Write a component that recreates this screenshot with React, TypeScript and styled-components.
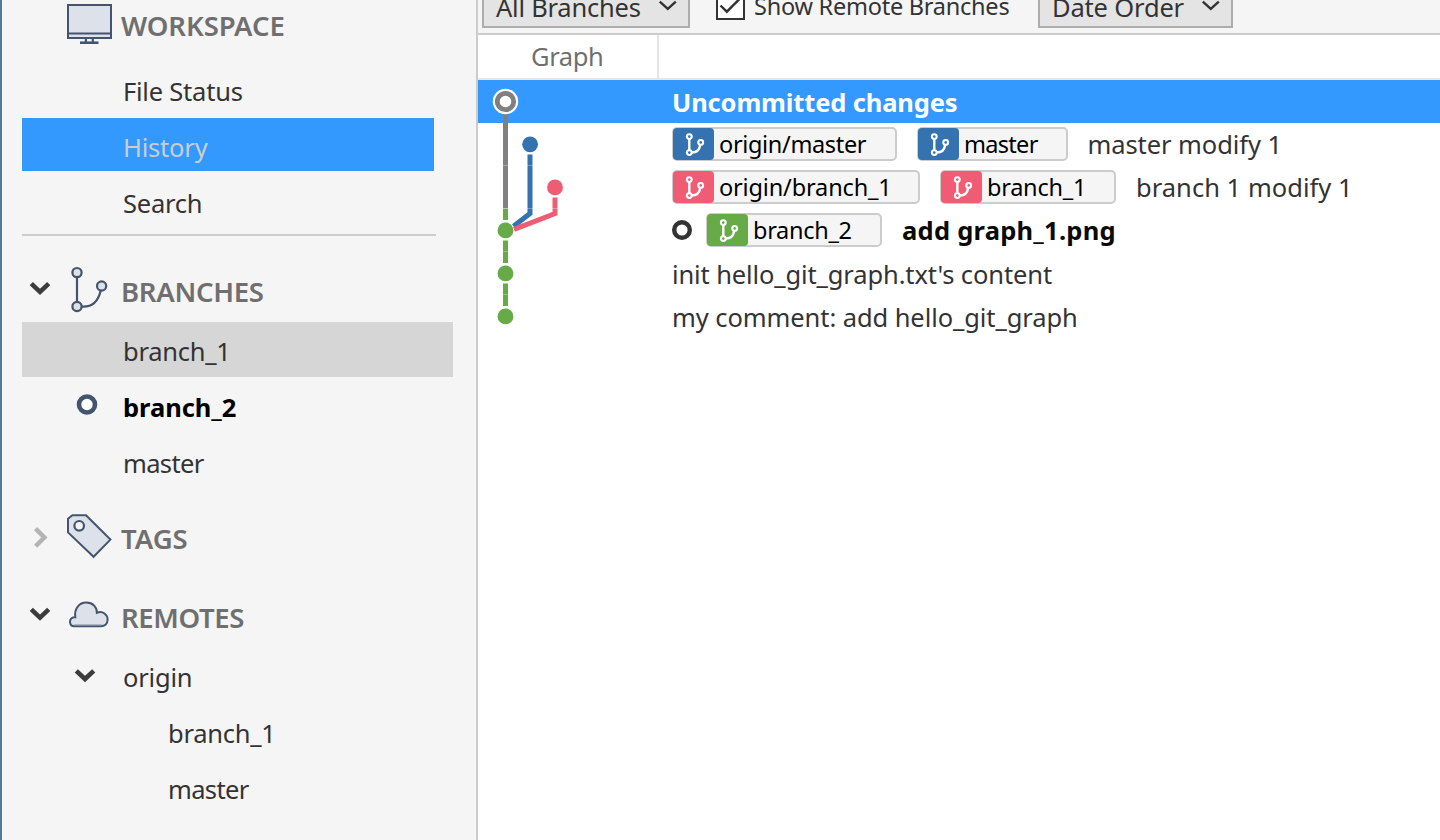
import React from 'react';
import styled, { createGlobalStyle } from 'styled-components';

const colors = {
  panel: '#f5f5f5',
  line: '#cccccc',
  accent: '#3399ff',
  slate: '#44546f',
  slateFill: '#dde1ea',
  blue: '#3572b0',
  pink: '#f15c75',
  green: '#67ab49',
  gray: '#808080',
};

const GlobalStyle = createGlobalStyle`
  * { box-sizing: border-box; }
  body {
    margin: 0;
    overflow: hidden;
    background: #fff;
    color: #333;
    font-family: 'Noto Sans', 'Open Sans', sans-serif;
    font-size: 25.5px;
  }
`;

const Window = styled.div`
  display: flex;
  width: 1440px;
  height: 840px;
  border-left: 2px solid #5a7699;
  overflow: hidden;
`;

const Label = styled.span<{ $spacing?: number }>`
  white-space: pre;
  letter-spacing: ${(p) => p.$spacing ?? 0}px;
`;

/* ---------- sidebar ---------- */

const Sidebar = styled.aside`
  flex: none;
  width: 476px;
  padding-left: 20px;
  background: ${colors.panel};
  border-right: 2px solid ${colors.line};
`;

const SectionHeader = styled.div<{ $height: number; $gap?: number }>`
  display: grid;
  grid-template-columns: 44px 48px auto;
  justify-content: start;
  height: ${(p) => p.$height}px;
  margin-top: ${(p) => p.$gap ?? 0}px;
  color: #6f6f6f;
  font-size: 27.5px;
  font-weight: 600;
  line-height: 52px;
`;

const HeaderLabel = styled(Label)`
  padding-left: 7px;
`;

const IconSlot = styled.svg`
  display: block;
  height: 50px;
  fill: none;
`;

const itemHeights = { plain: 56, current: 53, selected: 55, checked: 56 };

const Item = styled.div<{ $depth?: number; $tone?: 'current' | 'selected' | 'checked' }>`
  display: grid;
  grid-template-columns: 101px auto;
  justify-content: start;
  width: ${(p) => (p.$tone === 'selected' ? 431.4 : 411.6)}px;
  height: ${(p) => itemHeights[p.$tone ?? 'plain']}px;
  margin-bottom: ${(p) => 56 - itemHeights[p.$tone ?? 'plain']}px;
  padding-left: ${(p) => (p.$depth ?? 0) * 45}px;
  line-height: 59px;
  background: ${(p) =>
    p.$tone === 'current' ? colors.accent : p.$tone === 'selected' ? '#d6d6d6' : 'transparent'};
  color: ${(p) => (p.$tone === 'current' ? '#cccccc' : p.$tone === 'checked' ? '#000' : '#333')};
  font-weight: ${(p) => (p.$tone === 'checked' ? 700 : 400)};
`;

const ItemLabel = styled(Label)`
  grid-column: 2;
`;

const Marker = styled.svg`
  display: block;
  width: 100px;
  height: 55px;
  grid-row: 1;
  fill: none;
`;

const Divider = styled.hr`
  width: 414px;
  height: 2px;
  margin: 4px 0 30px;
  border: 0;
  background: ${colors.line};
`;

/* ---------- history ---------- */

const Main = styled.main`
  flex: 1;
  min-width: 0;
  background: #fff;
`;

const Toolbar = styled.div`
  display: flex;
  align-items: flex-end;
  height: 35px;
  padding: 0 0 5px 4px;
  background: ${colors.panel};
  border-bottom: 2px solid ${colors.line};
  overflow: hidden;
`;

const Select = styled.div<{ $width: number }>`
  display: flex;
  justify-content: space-between;
  flex: none;
  width: ${(p) => p.$width}px;
  height: 44px;
  padding: 0 10px 0 12px;
  border: 2px solid #adadad;
  background: #e4e4e4;
  line-height: 42px;
`;

const SelectArrow = styled.svg`
  width: 20px;
  height: 40px;
  fill: none;
  stroke: #333;
  stroke-width: 2.4;
`;

const CheckOption = styled.div`
  display: flex;
  align-items: flex-end;
  margin: 0 28px 0 26px;
  padding-bottom: 8px;
  font-size: 23.5px;
`;

const CheckBox = styled.svg`
  width: 29px;
  height: 29px;
  margin-right: 9px;
`;

const CheckLabel = styled(Label)`
  width: 256px;
  height: 30px;
  line-height: 33px;
`;

const ColumnHeads = styled.div`
  display: flex;
  height: 45px;
  border-bottom: 2px solid #e6e6e6;
  color: #6f6f6f;
  line-height: 43px;
`;

const GraphHead = styled.div`
  width: 181px;
  padding-left: 53px;
  border-right: 2px solid #e4e4e4;
`;

const Log = styled.div`
  position: relative;
`;

const Graph = styled.svg`
  position: absolute;
  left: 0;
  top: 0;
  fill: none;
`;

const Commit = styled.div<{ $selected?: boolean; $tagged?: boolean }>`
  display: flex;
  align-items: flex-start;
  height: 43px;
  padding-left: 194px;
  line-height: ${(p) => (p.$tagged ? 43 : 45)}px;
  background: ${(p) => (p.$selected ? colors.accent : 'transparent')};
  color: ${(p) => (p.$selected ? '#fff' : '#333')};
`;

const Strong = styled(Label)<{ $ink?: string }>`
  font-weight: 700;
  color: ${(p) => p.$ink ?? 'inherit'};
`;

const Tag = styled.span<{ $width: number }>`
  display: flex;
  flex: none;
  width: ${(p) => p.$width}px;
  height: 34px;
  margin: 4px 20px 0 0;
  border: 2px solid ${colors.line};
  border-radius: 5px;
  background: ${colors.panel};
  color: #000;
  font-size: 23.5px;
  line-height: 30px;
`;

const TagIcon = styled.svg<{ $color: string }>`
  flex: none;
  width: 41px;
  height: 32px;
  margin: -1px 5px 0 -1px;
  border-radius: 4px;
  background: ${(p) => p.$color};
  fill: none;
  stroke: #fff;
`;

const HeadRing = styled.svg`
  flex: none;
  width: 20px;
  height: 20px;
  margin: 11px 14px 0 0;
`;

function Chevron({ open = true, y }: { open?: boolean; y: number }) {
  return (
    <IconSlot width="44">
      {open ? (
        <path d={`M9.3 ${y} l8.7 8.2 l8.7 -8.2`} stroke="#3c3c3c" strokeWidth="4.6" />
      ) : (
        <path d={`M13.6 ${y} l8.8 8.8 l-8.8 8.8`} stroke="#b4b4b4" strokeWidth="4.4" />
      )}
    </IconSlot>
  );
}

function MonitorIcon() {
  return (
    <IconSlot width="48">
      <rect x="2" y="5" width="43" height="33" fill={colors.slateFill} stroke={colors.slate} strokeWidth="2" />
      <path d="M3 33.4h41" stroke={colors.slate} strokeWidth="2" />
      <path d="M19.9 39v3M26.8 39v3" stroke={colors.slate} strokeWidth="2.2" />
      <path d="M14 42.7h18.5" stroke={colors.slate} strokeWidth="2.6" />
    </IconSlot>
  );
}

function BranchesIcon() {
  return (
    <IconSlot width="48" stroke={colors.slate} strokeWidth="2.2">
      <path d="M11 11v25M15.5 40.6C25 41.3 32 36 34.6 25" />
      <g fill={colors.slateFill}>
        <circle cx="11" cy="6.6" r="4.6" />
        <circle cx="11" cy="40.5" r="4.6" />
        <circle cx="35.6" cy="20" r="4.6" />
      </g>
    </IconSlot>
  );
}

function TagsIcon() {
  return (
    <IconSlot width="48" stroke={colors.slate} strokeWidth="2">
      <path d="M2 5.8L6.4 2.2H20L44.4 26.6L27.6 43.8L2 19.4z" fill={colors.slateFill} />
      <circle cx="13.2" cy="12.8" r="4.8" fill={colors.panel} strokeWidth="2.2" />
    </IconSlot>
  );
}

function CloudIcon() {
  return (
    <IconSlot width="48" stroke={colors.slate} strokeWidth="2">
      <path
        d="M8.5 34.2C5.5 34.2 4 32.3 4 29.7C4 26.8 6.4 24.9 9.3 25.2C8 16.6 13.4 10.6 20.3 10.6C27 10.6 31 15.2 30.9 20.8C36.8 18.4 41.6 22.7 41.6 27.6C41.6 31.7 38.8 34.2 35 34.2z"
        fill={colors.slateFill}
      />
      <path d="M8 32.8h28" stroke="#9aa3b5" strokeWidth="1" />
    </IconSlot>
  );
}

function RefTag({ name, color, width, spacing }: { name: string; color: string; width: number; spacing: number }) {
  return (
    <Tag $width={width}>
      <TagIcon $color={color} strokeWidth="2.4">
        <path d="M16.3 10.5v12M18.8 24.5C23.5 24.5 26.5 21.5 27.2 17" />
        <g fill={color} strokeWidth="2.1">
          <circle cx="16.3" cy="8.6" r="2.4" />
          <circle cx="16.3" cy="24.6" r="2.4" />
          <circle cx="27.7" cy="14.4" r="2.4" />
        </g>
      </TagIcon>
      <Label $spacing={spacing}>{name}</Label>
    </Tag>
  );
}

function CommitGraph() {
  return (
    <Graph width="180" height="258">
      <g strokeWidth="5">
        <path d="M27.5 34V128.5" stroke={colors.gray} />
        <path d="M27.5 128.5V140M27.5 160.6V183M27.5 203.6V226" stroke={colors.green} />
        <path d="M52 74.5V133.5L35.5 146.3" stroke={colors.blue} />
        <path d="M77 117.5V133.6L36 149.3" stroke={colors.pink} />
      </g>
      <path
        d="M24 85.5h7M24 128.5h7M24 171.5h7M24 214.5h7M49 85.5h7M49 128.5h7M74 128.5h7"
        stroke="#fff"
        strokeOpacity=".3"
      />
      <circle cx="27.5" cy="21.5" r="12.7" fill="#fff" />
      <circle cx="27.5" cy="21.5" r="8.2" stroke={colors.gray} strokeWidth="4.8" />
      <circle cx="52.1" cy="64.3" r="7.9" fill={colors.blue} />
      <circle cx="77" cy="107.4" r="7.9" fill={colors.pink} />
      <circle cx="27.5" cy="150.4" r="7.9" fill={colors.green} />
      <circle cx="27.5" cy="193.4" r="7.9" fill={colors.green} />
      <circle cx="27.5" cy="236.4" r="7.9" fill={colors.green} />
    </Graph>
  );
}

function DropDown({ text, width, spacing }: { text: string; width: number; spacing: number }) {
  return (
    <Select $width={width}>
      <Label $spacing={spacing}>{text}</Label>
      <SelectArrow>
        <path d="M1.8 15.6l8 7.2 8-7.2" />
      </SelectArrow>
    </Select>
  );
}

export default function App() {
  return (
    <Window>
      <GlobalStyle />
      <Sidebar>
        <SectionHeader $height={62}>
          <span />
          <MonitorIcon />
          <HeaderLabel $spacing={-0.1}>WORKSPACE</HeaderLabel>
        </SectionHeader>
        <Item><ItemLabel $spacing={-0.22}>File Status</ItemLabel></Item>
        <Item $tone="current"><ItemLabel $spacing={-0.2}>History</ItemLabel></Item>
        <Item><ItemLabel $spacing={-0.25}>Search</ItemLabel></Item>
        <Divider />

        <SectionHeader $height={56}>
          <Chevron y={17.6} />
          <BranchesIcon />
          <HeaderLabel $spacing={-0.3}>BRANCHES</HeaderLabel>
        </SectionHeader>
        <Item $tone="selected"><ItemLabel $spacing={-0.25}>branch_1</ItemLabel></Item>
        <Item $tone="checked">
          <Marker><circle cx="65" cy="26.5" r="8" stroke={colors.slate} strokeWidth="4.6" fill="#fff" /></Marker>
          <ItemLabel $spacing={-0.05}>branch_2</ItemLabel>
        </Item>
        <Item><ItemLabel $spacing={-0.65}>master</ItemLabel></Item>

        <SectionHeader $height={56} $gap={23}>
          <Chevron open={false} y={15.6} />
          <TagsIcon />
          <HeaderLabel $spacing={0}>TAGS</HeaderLabel>
        </SectionHeader>

        <SectionHeader $height={56} $gap={23}>
          <Chevron y={17.4} />
          <CloudIcon />
          <HeaderLabel $spacing={-0.35}>REMOTES</HeaderLabel>
        </SectionHeader>
        <Item>
          <Marker><path d="M54.3 22.8l8.7 8.2 8.7-8.2" stroke="#3c3c3c" strokeWidth="4.6" /></Marker>
          <ItemLabel $spacing={-0.2}>origin</ItemLabel>
        </Item>
        <Item $depth={1}><ItemLabel $spacing={-0.25}>branch_1</ItemLabel></Item>
        <Item $depth={1}><ItemLabel $spacing={-0.65}>master</ItemLabel></Item>
      </Sidebar>

      <Main>
        <Toolbar>
          <DropDown text="All Branches" width={208} spacing={-0.22} />
          <CheckOption>
            <CheckBox>
              <rect x="1" y="1" width="27" height="27" fill="#fff" stroke="#333" strokeWidth="2" />
              <path d="M4.5 14.5l6.3 6.2L23.5 8" fill="none" stroke="#333" strokeWidth="2.4" />
            </CheckBox>
            <CheckLabel $spacing={-0.24}>Show Remote Branches</CheckLabel>
          </CheckOption>
          <DropDown text="Date Order" width={195} spacing={-0.17} />
        </Toolbar>
        <ColumnHeads>
          <GraphHead><Label $spacing={-0.4}>Graph</Label></GraphHead>
        </ColumnHeads>
        <Log>
          <Commit $selected><Strong $spacing={-0.14}>Uncommitted changes</Strong></Commit>
          <Commit $tagged>
            <RefTag name="origin/master" color={colors.blue} width={225} spacing={-0.34} />
            <RefTag name="master" color={colors.blue} width={150.5} spacing={-0.7} />
            <Label $spacing={-0.08}>master modify 1</Label>
          </Commit>
          <Commit $tagged>
            <RefTag name="origin/branch_1" color={colors.pink} width={248} spacing={-0.15} />
            <RefTag name="branch_1" color={colors.pink} width={176} spacing={-0.25} />
            <Label $spacing={0.03}>branch 1 modify 1</Label>
          </Commit>
          <Commit $tagged>
            <HeadRing><circle cx="10" cy="10" r="7.8" fill="#fff" stroke="#333" strokeWidth="4.4" /></HeadRing>
            <RefTag name="branch_2" color={colors.green} width={176} spacing={-0.3} />
            <Strong $ink="#0a0a0a" $spacing={0.25}>add graph_1.png</Strong>
          </Commit>
          <Commit><Label $spacing={-0.12}>init hello_git_graph.txt's content</Label></Commit>
          <Commit><Label $spacing={-0.08}>my comment: add hello_git_graph</Label></Commit>
          <CommitGraph />
        </Log>
      </Main>
    </Window>
  );
}
